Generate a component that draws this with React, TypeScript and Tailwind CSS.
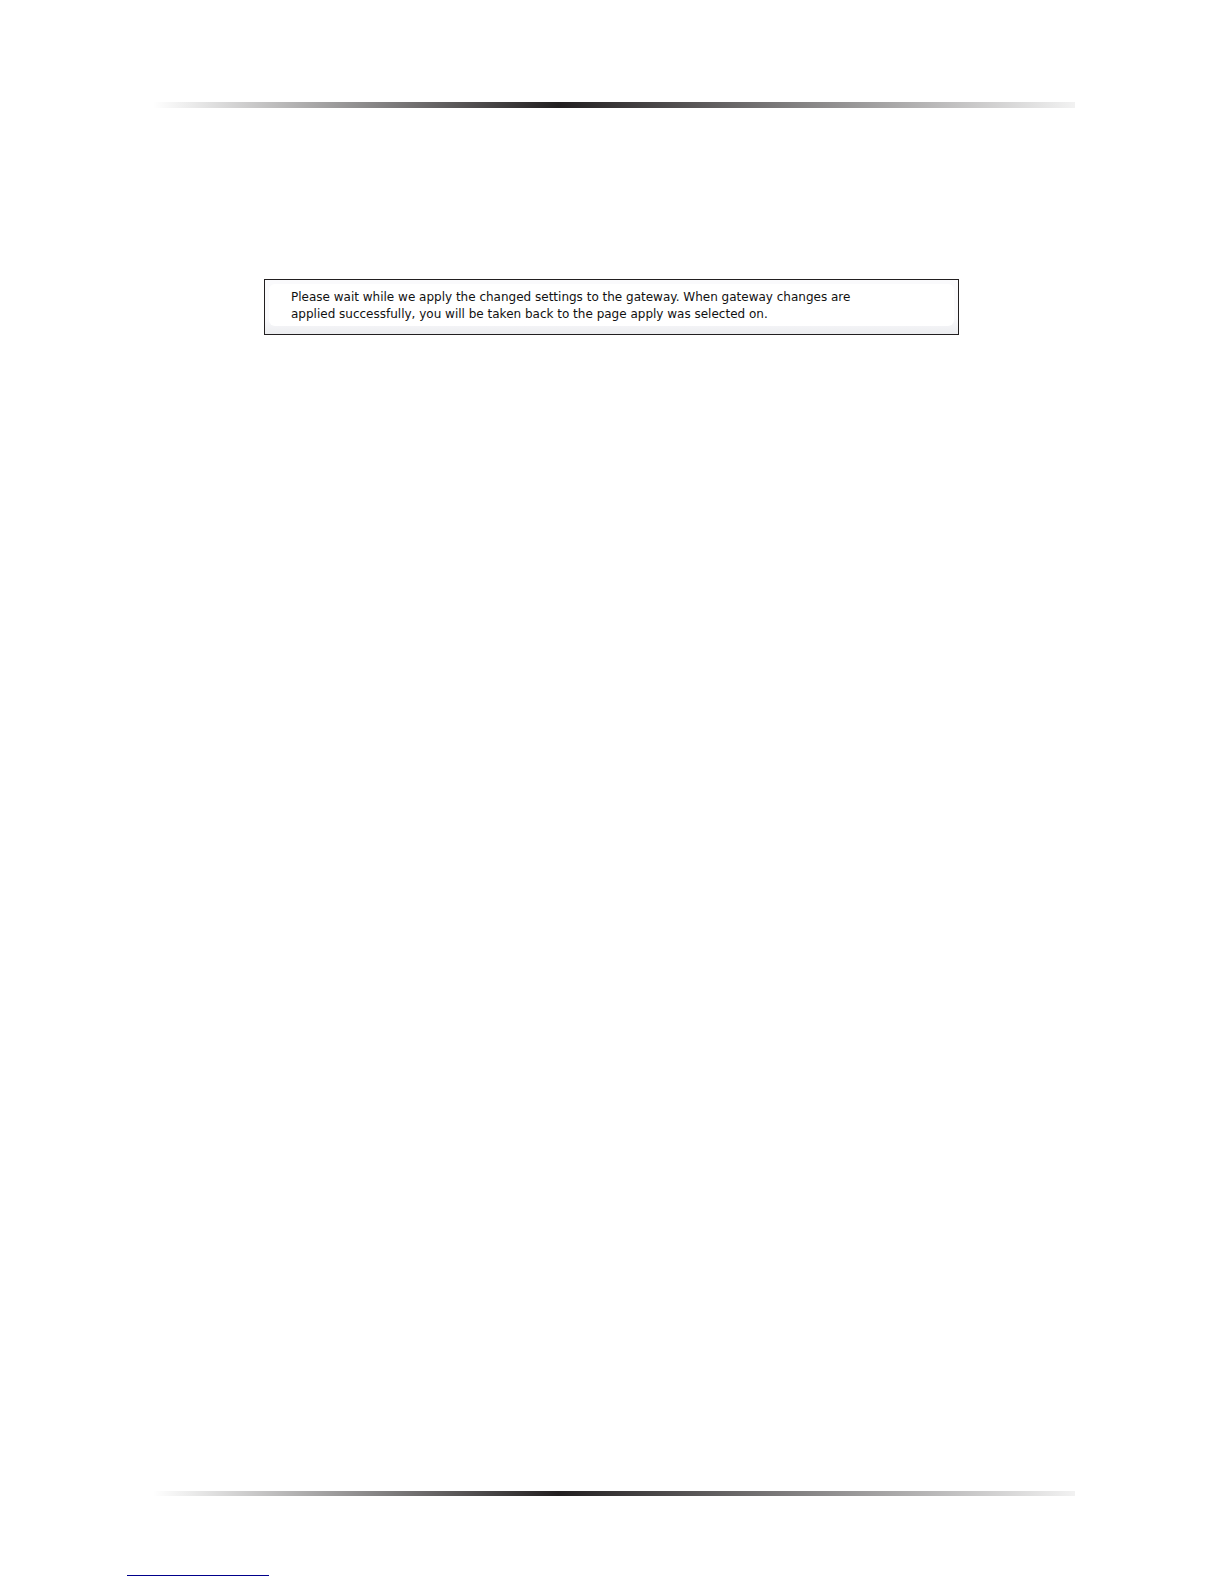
interface RuleProps {
  className: string
}

// Horizontal rule that fades out towards both margins
function GradientRule({ className }: RuleProps) {
  return (
    <div
      className={`bg-[linear-gradient(to_right,#ffffff,#ececec_4%,#221f20_44%,#f2f2f2)] ${className}`}
    />
  )
}

function StatusPanel() {
  return (
    <section
      role="status"
      className="mr-[116px] ml-[111px] border border-[#221f20] bg-linear-to-b from-[#fafafc] from-70% to-[#ecedf0] pt-1 pr-1 pb-2 pl-1"
    >
      <div className="rounded-md bg-white pt-[5px] pb-[3px] pl-[22px]">
        <p className="font-['DejaVu_Sans','Verdana',sans-serif] text-[12px] leading-[17px] text-[#111111]">
          Please wait while we apply the changed settings to the gateway. When gateway changes are
          <br />
          applied successfully, you will be taken back to the page apply was selected on.
        </p>
      </div>
    </section>
  )
}

export default function App() {
  return (
    <div className="flex min-h-screen flex-col bg-white">
      <header className="pt-[102px] pr-[149px] pl-[153px]">
        <GradientRule className="h-[6px]" />
      </header>

      <main className="grow pt-[171px] pr-[149px] pl-[153px]">
        <StatusPanel />
      </main>

      <footer className="pb-2">
        <div className="pr-[149px] pl-[153px]">
          <GradientRule className="h-[5px]" />
        </div>
        <div className="mt-[79px] ml-[127px] h-px w-[142px] bg-[#00008b]" />
      </footer>
    </div>
  )
}
